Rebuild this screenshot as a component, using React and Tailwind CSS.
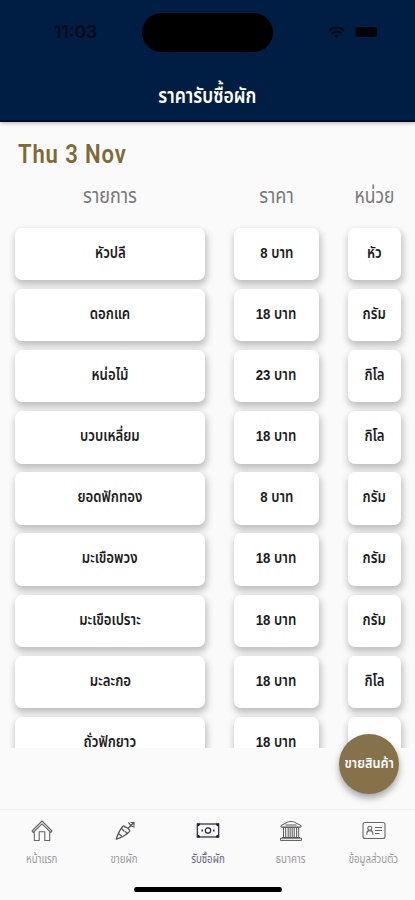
const rows = [
  ["หัวปลี", "8 บาท", "หัว"],
  ["ดอกแค", "18 บาท", "กรัม"],
  ["หน่อไม้", "23 บาท", "กิโล"],
  ["บวบเหลี่ยม", "18 บาท", "กิโล"],
  ["ยอดฟักทอง", "8 บาท", "กรัม"],
  ["มะเขือพวง", "18 บาท", "กรัม"],
  ["มะเขือเปราะ", "18 บาท", "กรัม"],
  ["มะละกอ", "18 บาท", "กิโล"],
  ["ถั่วฟักยาว", "18 บาท", ""],
];

function Card({ children }) {
  return (
    <div className="flex h-[52.5px] items-center justify-center rounded-[7px] bg-white pb-[2px] text-[15px] font-semibold text-[#1c1c1c] shadow-[1px_4px_7px_1px_rgba(0,0,0,0.24)]">
      <span className="inline-block scale-x-[0.88] whitespace-nowrap">{children}</span>
    </div>
  );
}

function HomeIcon() {
  return (
    <svg width="22" height="22" viewBox="0 0 22 22" fill="none" stroke="#666" strokeWidth="1.1" strokeLinejoin="round">
      <path d="M1 11 11 1l10 10-1.200 1.500L11 3.800l-8.800 8.700Z" />
      <path d="M3.300 12v8.500h4.900v-8.700h5.600v8.700h4.900V12" />
    </svg>
  );
}

function CarrotIcon() {
  return (
    <svg width="22" height="22" viewBox="0 0 22 22" fill="none" stroke="#505050" strokeWidth="1.200" strokeLinejoin="round" strokeLinecap="round">
      <path d="M2.200 19.300c1.300-4.300 3.500-9.300 6.500-12.800 1-1 2-.5 2.300.8.500-.3 1.500-.3 2 .3l2.300 2.200c.7.700.5 1.800-.3 2.300-3.500 3.200-7.800 5.700-12.800 7.200Z" />
      <path d="m8 9 2 2M5 14l2.500 2M13.500 13.500l-2-1.800M14 8.500l4.800-5M14.800 2.800l1.700 2.400M20.300 7l-3-1M17 2.500h3v2.700" />
    </svg>
  );
}

function MoneyIcon() {
  return (
    <svg width="24" height="22" viewBox="0 0 24 22" fill="none" stroke="#24243c" strokeWidth="1.200">
      <rect x="1.300" y="4" width="21.400" height="13" />
      <circle cx="12" cy="10.500" r="2.700" />
      <path d="M1 3.500h3.200c0 1.800-1.200 3-3.200 3ZM23 3.500h-3.200c0 1.800 1.200 3 3.200 3ZM1 17.500h3.200c0-1.800-1.200-3-3.200-3ZM23 17.500h-3.200c0-1.800 1.200-3 3.200-3Z" fill="#24243c" stroke="none" />
      <path d="M5.500 10.500H7M17 10.500h1.500" strokeWidth="1.800" />
    </svg>
  );
}

function BankIcon() {
  return (
    <svg width="24" height="22" viewBox="0 0 24 22" fill="none" stroke="#585858" strokeWidth="1">
      <path d="M2 5.500 7 3c3-2 7-2 10 0l5 2.500v1.600H2ZM6.500 5h11M3.500 7.300h17M3 17.500h18M1.500 18.200h21v2.200h-21Z" />
      <path d="M4.500 8v10M6.700 8v10M9.200 8v10M11.200 8v10M13.200 8v10M15.200 8v10M17.600 8v10M19.700 8v10" />
    </svg>
  );
}

function IdIcon() {
  return (
    <svg width="24" height="22" viewBox="0 0 24 22" fill="none" stroke="#666" strokeWidth="1.100">
      <rect x="1" y="2.500" width="22" height="16" rx="2" />
      <circle cx="7.800" cy="8.300" r="2" />
      <path d="M4.800 14.800v-1.500c0-3.600 6-3.600 6 0v1.500M13 7.500h7M13 10.500h7M13 13.500h4.500" />
    </svg>
  );
}

function Tab({ icon, label, active }) {
  return (
    <div className="flex w-[83px] flex-col items-center">
      {icon}
      <span className={`mt-[9px] h-4 scale-x-[0.84] whitespace-nowrap text-[11.5px] leading-4 ${active ? "text-[#66667a]" : "text-[#999]"}`}>{label}</span>
    </div>
  );
}

export default function App() {
  return (
    <div className="relative flex h-[900px] w-[415px] flex-col overflow-hidden bg-[#fafafa] font-['Liberation_Sans','Noto_Sans_Thai',sans-serif]">
      <header className="z-10 flex h-[122px] shrink-0 flex-col border-b-2 border-[#000c20] bg-[#001d43] shadow-[0_1px_4px_rgba(0,0,0,0.3)]">
        <div className="flex h-[64px] items-center pl-[54px] pr-[38px]">
          <span className="w-[88px] font-['Inter',sans-serif] text-[17.5px] font-semibold text-[#000916]">11:03</span>
          <div className="h-[39px] w-[131px] rounded-full bg-black" />
          <div className="ml-auto flex items-center gap-[10px]">
            <svg width="17" height="13" viewBox="0 0 17 13" fill="none" stroke="#000916" strokeWidth="2.200">
              <path d="M1 4.500c4.300-4 10.700-4 15 0M3.800 7.500c2.700-2.500 6.700-2.500 9.400 0" />
              <path d="m8.500 12.300-2.600-2.900c1.500-1.200 3.700-1.200 5.200 0Z" fill="#000916" stroke="none" />
            </svg>
            <div className="h-[10px] w-[22px] rounded-[2px] bg-[#00050c]" />
          </div>
        </div>
        <h1 className="flex h-[56px] items-center justify-center pt-[7px] text-[22px] font-semibold text-white">
          <span className="inline-block scale-x-[0.8] whitespace-nowrap">ราคารับซื้อผัก</span>
        </h1>
      </header>
      <h2 className="mt-4 h-8 shrink-0 pl-[18px] font-['Roboto',sans-serif] text-[26px] font-semibold leading-[33px] text-[#7c6a38]">
        <span className="inline-block origin-left scale-x-[0.85] whitespace-nowrap tracking-[1px]">Thu 3 Nov</span>
      </h2>
      <div className="mt-[9px] grid h-[34px] shrink-0 grid-cols-[190px_85px_53px] items-center justify-between pl-[15px] pr-[14px] text-center text-[21px] leading-[34px] text-[#777]">
        <span className="scale-x-[0.86]">รายการ</span>
        <span className="scale-x-[0.86]">ราคา</span>
        <span className="scale-x-[0.83] whitespace-nowrap">หน่วย</span>
      </div>
      <main className="h-[534.500px] shrink-0 overflow-hidden pt-[14.500px]">
        <div className="grid grid-cols-[190px_85px_53px] justify-between gap-y-[8.700px] pl-[15px] pr-[14px]">
          {rows.flatMap((r, i) => r.map((t, j) => <Card key={`${i}-${j}`}>{t}</Card>))}
        </div>
      </main>
      <button className="absolute left-[339px] top-[734px] flex size-[60px] items-center justify-center rounded-full bg-[#85724a] text-[13.5px] font-semibold text-white shadow-[0_4px_7px_rgba(0,0,0,0.35)]">
        <span className="inline-block scale-x-[0.94] whitespace-nowrap">ขายสินค้า</span>
      </button>
      <nav className="mt-auto flex h-[91px] shrink-0 flex-col items-center border-t border-[#eee]">
        <div className="flex h-[77px] w-full pt-[10px]">
          <Tab icon={<HomeIcon />} label="หน้าแรก" />
          <Tab icon={<CarrotIcon />} label="ขายผัก" />
          <Tab icon={<MoneyIcon />} label="รับซื้อผัก" active />
          <Tab icon={<BankIcon />} label="ธนาคาร" />
          <Tab icon={<IdIcon />} label="ข้อมูลส่วนตัว" />
        </div>
        <div className="h-[5px] w-[148px] rounded-full bg-black" />
      </nav>
    </div>
  );
}
